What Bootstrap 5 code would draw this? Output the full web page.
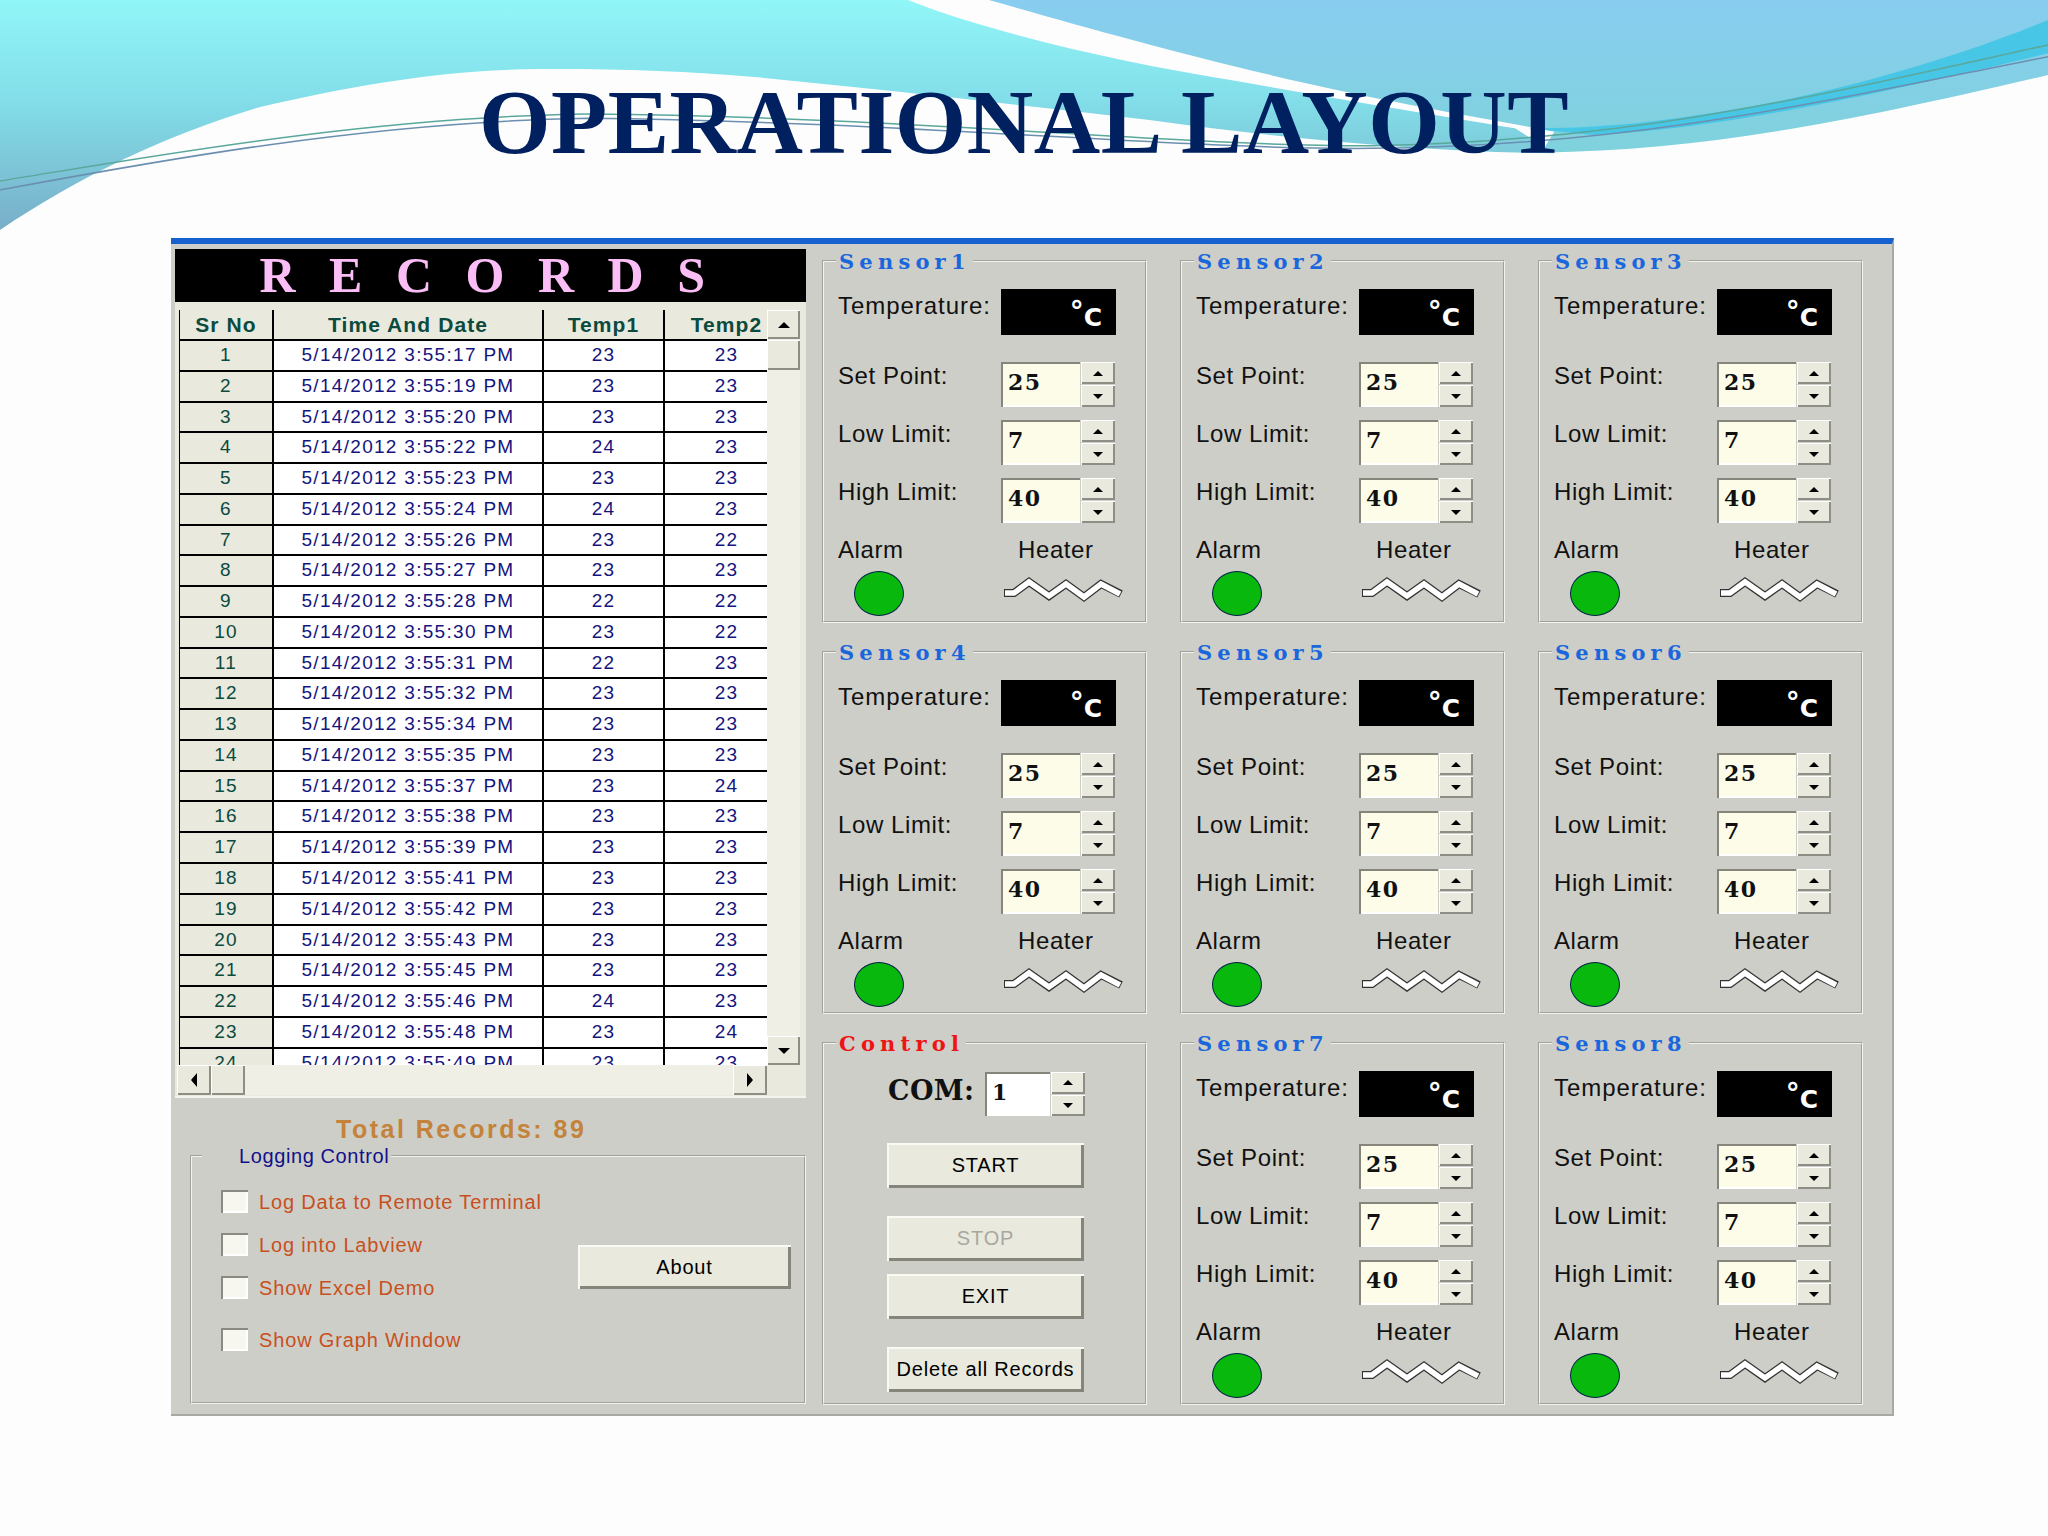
<!DOCTYPE html>
<html lang="en"><head><meta charset="utf-8"><title>Operational Layout</title>
<link href="https://cdn.jsdelivr.net/npm/bootstrap@5.3.0/dist/css/bootstrap.min.css" rel="stylesheet">
<style>
body{background:#fdfdfd;font-family:"Liberation Sans",Arial,sans-serif;width:2048px;height:1536px;overflow:hidden;position:relative}
.slide-bg{position:absolute;left:0;top:0;width:2048px;height:240px;z-index:0}
.slide-head{position:relative;z-index:1;height:238px;padding-top:70px}
.slide-title{font:700 92px/1.15 "Liberation Serif",serif;color:#002060;text-align:center;margin:0;letter-spacing:.5px}
.app-win{position:relative;z-index:1;margin-left:171px;width:1723px;background:#cecec8;border-top:6px solid #1660d0;border-bottom:2px solid #a9a9a3;border-right:2px solid #a9a9a3;padding:5px 30px 10px 4px;gap:16px;height:1178px}
.left-col{width:631px}
.rec-title{height:53px;background:#000;color:#fbbdf5;font:700 50px/53px "Liberation Serif",serif;letter-spacing:10.5px;text-align:center;white-space:nowrap;padding-right:6px}
.grid-box{height:796px;background:#e9e9dd;padding:8px 6px 3px 2px;border-bottom:2px solid #f4f4ec}
.table-wrap{width:588px;height:755px;margin-left:2px;overflow:hidden;background:#fff;border-left:1px solid #000}
.rec-table{table-layout:fixed;width:610px;border-collapse:separate;border-spacing:0;margin:0}
.rec-table.table>:not(caption)>*>*{padding:0;height:30.77px;line-height:28px;font-size:19px;letter-spacing:1.3px;color:#14147e;text-align:center;border-width:0 2px 2px 0;border-style:solid;border-color:#000;background:#fff;box-shadow:none;white-space:nowrap}
.rec-table.table>thead>tr>th{height:31px;font-size:21px;font-weight:700;letter-spacing:1.1px;color:#0b4a3e;background:#e9e9dd}
.rec-table.table>tbody>tr>th{font-weight:400;color:#0b4a3e;background:#e9e9dd}
.vbar{width:33px;height:755px}
.track{background:#efefe6}
.sb-btn{background:#e9e9dd;box-shadow:inset 1px 1px 0 #fff,inset -2px -2px 0 #8e8e86;flex:none}
.sb-v{height:29px}.sb-vt{height:30px;margin-top:1px}
.sb-h{width:34px;height:30px}
.hbar{height:30px;width:623px}
.hbar .corner{width:33px;flex:none}
.tri{display:block;width:0;height:0;border-style:solid;border-color:transparent}
.t-up{border-width:0 6px 6px;border-bottom-color:#000}
.t-dn{border-width:6px 6px 0;border-top-color:#000}
.t-lf{border-width:7px 6px 7px 0;border-right-color:#000}
.t-rt{border-width:7px 0 7px 6px;border-left-color:#000}
.total-line{font-size:25px;line-height:30px;font-weight:700;color:#c4823a;letter-spacing:2.5px;margin-top:16px;padding-left:161px;height:30px;white-space:nowrap}
.etched{border:2px groove #f4f4ee;margin:0;min-width:0}
.etched>legend{float:none;width:auto;height:24px;margin:0 0 0 -2px;padding:0 2px 0 3px;font:700 21px/25px "DejaVu Serif",serif;letter-spacing:5.2px;color:#1a66dc}
.etched>legend.red{color:#ee1414}
.log-box{height:261px;margin-left:15px;padding:22px 13px 0 29px}
.log-box>legend{margin-left:-19px;padding:0 2px 0 37px;font:400 20px/24px "Liberation Sans",sans-serif;letter-spacing:.6px;color:#10108a}
.chk-row{height:23px;gap:11px;color:#c8501e;font-size:20px;letter-spacing:.85px;margin-bottom:20px;white-space:nowrap}
.chk-row.far{margin-top:29px}
.win-check.form-check-input{width:27px;height:23px;margin:0;border-radius:0;background-color:#f7f7ef;border:0;box-shadow:inset 2px 2px 0 #8a8a82,inset -2px -2px 0 #fff;flex:none}
.win-btn.btn{background:#e9e9dd;color:#000;border:0;border-radius:0;padding:0;width:197px;height:45px;font-size:20px;letter-spacing:.8px;line-height:45px;box-shadow:inset 2px 2px 0 #fafaf4,inset -3px -3px 0 #85857c;display:block}
.win-btn.off{color:#a8a8a0;opacity:1}
.about-btn.btn{width:213px;height:44px;margin-top:55px}
.sensor-grid{display:grid;grid-template-columns:repeat(3,325px);grid-template-rows:repeat(3,374px);column-gap:33px;row-gap:17px}
.sensor-box{padding:0 14px;height:374px}
.lbl{width:163px;font-size:24px;line-height:28px;letter-spacing:.6px;color:#111;flex:none;white-space:nowrap}
.lbl-temp{letter-spacing:.95px;padding-top:3px}
.temp-show{width:115px;height:46px;background:#000;color:#fff;text-align:right;padding-right:14px;font:700 25px/46px "DejaVu Sans",sans-serif;letter-spacing:0}
.deg{font-size:28px;vertical-align:5px}
.temp-row{margin-top:16px;margin-bottom:27px}
.spin-row{margin-bottom:13px}
.spin{height:45px;width:114px;gap:1px}
.spin-val{width:79px;height:45px;background:#fcfce8;box-shadow:inset 2px 2px 0 #85857c,inset 0 -2px 0 #fff;padding:5px 0 0 7px;font:700 22px/30px "DejaVu Serif",serif;letter-spacing:1.5px;color:#111}
.spin-btns{width:34px;gap:1px}
.spin-b{height:22px;background:#e9e9dd;box-shadow:inset 1px 1px 0 #fff,inset -2px -2px 0 #8e8e86}
.spin-b .tri{border-width:0 5px 5px}
.spin-b .t-dn{border-width:5px 5px 0}
.alarm-row{margin-top:1px}
.lamp{width:50px;height:45px;border-radius:50%;background:#08b80c;border:1.5px solid #024;margin:7px 0 0 16px}
.heater-col{flex:1}
.heater-name{padding-left:17px;width:auto}
.heater-svg{display:block;width:122px;height:26px;margin:13px 0 0 1px}
.com-row{margin:17px 0 27px 50px;height:44px}
.com-name{font:700 27px/38px "DejaVu Serif",serif;letter-spacing:.4px;width:97px;color:#111}
.com-spin{width:100px;height:44px;gap:1px}
.com-spin .spin-val{width:65px;height:44px;background:#fff;padding-top:5px}
.ctl-col{margin-left:49px}
.gap-28{margin-bottom:28px}.gap-13{margin-bottom:13px}
</style></head>
<body>
<svg class="slide-bg" viewBox="0 0 1568 720" preserveAspectRatio="none" aria-hidden="true">
<defs>
<linearGradient id="gc" x1="0" y1="0" x2="0" y2="1"><stop offset="0" stop-color="#91f6f8"/><stop offset=".45" stop-color="#82dde8"/><stop offset="1" stop-color="#78aec8"/></linearGradient>
<linearGradient id="gb" x1="0" y1="0" x2="0" y2="1"><stop offset="0" stop-color="#88cdf0"/><stop offset="1" stop-color="#7fd2dc"/></linearGradient>
</defs>
<path fill="url(#gc)" d="M0,0 L695,0 C760,100 860,190 950,245 C1020,295 1100,345 1160,385 L1190,460 C1100,455 1000,425 880,360 C780,315 680,270 580,232 C520,212 460,205 400,208 C330,215 265,262 200,320 C130,400 60,530 0,690 Z"/>
<path fill="url(#gb)" d="M757,0 C830,80 900,160 1000,250 C1080,320 1130,350 1190,395 L1180,458 C1300,450 1400,380 1568,225 L1568,0 Z"/>
<path fill="#48c6e6" d="M1568,60 C1500,170 1400,290 1300,345 C1260,370 1220,385 1170,385 L1220,405 C1300,390 1400,320 1568,160 Z"/>
<path fill="none" stroke="#5aa79c" stroke-width="1.5" vector-effect="non-scaling-stroke" d="M0,543 C100,480 280,350 450,342 C700,350 900,440 1050,437 C1250,425 1400,280 1568,135"/>
<path fill="none" stroke="#6b8fb0" stroke-width="1.5" vector-effect="non-scaling-stroke" d="M0,570 C110,490 280,365 450,355 C700,365 900,450 1050,445 C1250,440 1400,300 1568,170"/>
</svg>
<header class="slide-head"><h1 class="slide-title">OPERATIONAL LAYOUT</h1></header>
<main class="app-win d-flex">
 <section class="left-col d-flex flex-column">
  <div class="rec-title">R E C O R D S</div>
  <div class="grid-box">
   <div class="d-flex">
    <div class="table-wrap">
     <table class="table rec-table"><colgroup><col style="width:94px"><col style="width:270px"><col style="width:121px"><col style="width:125px"></colgroup>
     <thead><tr><th>Sr No</th><th>Time And Date</th><th>Temp1</th><th>Temp2</th></tr></thead><tbody id="rows"></tbody></table>
    </div>
    <div class="vbar d-flex flex-column track">
     <div class="sb-btn sb-v d-flex align-items-center justify-content-center"><i class="tri t-up"></i></div>
     <div class="sb-btn sb-vt"></div>
     <div class="flex-grow-1"></div>
     <div class="sb-btn sb-v d-flex align-items-center justify-content-center"><i class="tri t-dn"></i></div>
    </div>
   </div>
   <div class="hbar d-flex">
    <div class="sb-btn sb-h d-flex align-items-center justify-content-center"><i class="tri t-lf"></i></div>
    <div class="sb-btn sb-h"></div>
    <div class="track flex-grow-1"></div>
    <div class="sb-btn sb-h d-flex align-items-center justify-content-center"><i class="tri t-rt"></i></div>
    <div class="corner"></div>
   </div>
  </div>
  <div class="total-line">Total Records: 89</div>
  <fieldset class="etched log-box">
   <legend>Logging Control</legend>
   <div class="d-flex justify-content-between align-items-start">
    <div>
     <label class="chk-row d-flex align-items-center"><input class="form-check-input win-check" type="checkbox">Log Data to Remote Terminal</label>
     <label class="chk-row d-flex align-items-center"><input class="form-check-input win-check" type="checkbox">Log into Labview</label>
     <label class="chk-row d-flex align-items-center"><input class="form-check-input win-check" type="checkbox">Show Excel Demo</label>
     <label class="chk-row far d-flex align-items-center"><input class="form-check-input win-check" type="checkbox">Show Graph Window</label>
    </div>
    <button class="btn win-btn about-btn" type="button">About</button>
   </div>
  </fieldset>
 </section>
 <section class="sensor-grid" id="sensors"></section>
</main>
<script src="https://cdn.jsdelivr.net/npm/bootstrap@5.3.0/dist/js/bootstrap.bundle.min.js"></script>
<script>
var data=[[17,23,23],[19,23,23],[20,23,23],[22,24,23],[23,23,23],[24,24,23],[26,23,22],[27,23,23],[28,22,22],[30,23,22],[31,22,23],[32,23,23],[34,23,23],[35,23,23],[37,23,24],[38,23,23],[39,23,23],[41,23,23],[42,23,23],[43,23,23],[45,23,23],[46,24,23],[48,23,24],[49,23,23]];
document.getElementById('rows').innerHTML=data.map(function(r,i){return '<tr><th>'+(i+1)+'</th><td>5/14/2012 3:55:'+r[0]+' PM</td><td>'+r[1]+'</td><td>'+r[2]+'</td></tr>';}).join('');
var btns='<div class="spin-btns d-flex flex-column"><div class="spin-b d-flex align-items-center justify-content-center"><i class="tri t-up"></i></div><div class="spin-b d-flex align-items-center justify-content-center"><i class="tri t-dn"></i></div></div>';
function spin(l,v){return '<div class="spin-row d-flex align-items-start"><span class="lbl">'+l+'</span><div class="spin d-flex"><div class="spin-val">'+v+'</div>'+btns+'</div></div>';}
function sensor(n){return '<fieldset class="etched sensor-box"><legend>Sensor'+n+'</legend>'+
'<div class="temp-row d-flex align-items-start"><span class="lbl lbl-temp">Temperature:</span><div class="temp-show"><span class="deg">°</span>C</div></div>'+
spin('Set Point:',25)+spin('Low Limit:',7)+spin('High Limit:',40)+
'<div class="alarm-row d-flex"><div><span class="lbl d-block">Alarm</span><div class="lamp"></div></div><div class="heater-col"><span class="lbl heater-name d-block">Heater</span>'+
'<svg class="heater-svg" viewBox="0 0 122 26"><polyline points="2,16 12,16 27,5 47,19 64,7 82,20 99,7 119,17" fill="none" stroke="#333" stroke-width="8"/><polyline points="3,16 12,16 27,5 47,19 64,7 82,20 99,7 118,17" fill="none" stroke="#fff" stroke-width="5.5"/></svg></div></div></fieldset>';}
var control='<fieldset class="etched sensor-box"><legend class="red">Control</legend><div class="com-row d-flex"><span class="com-name">COM:</span><div class="com-spin d-flex"><div class="spin-val">1</div>'+btns+'</div></div>'+
'<div class="ctl-col"><button class="btn win-btn gap-28" type="button">START</button><button class="btn win-btn off gap-13" type="button" disabled>STOP</button><button class="btn win-btn gap-28" type="button">EXIT</button><button class="btn win-btn" type="button">Delete all Records</button></div></fieldset>';
document.getElementById('sensors').innerHTML=[1,2,3,4,5,6].map(sensor).join('')+control+sensor(7)+sensor(8);
</script>
</body></html>
